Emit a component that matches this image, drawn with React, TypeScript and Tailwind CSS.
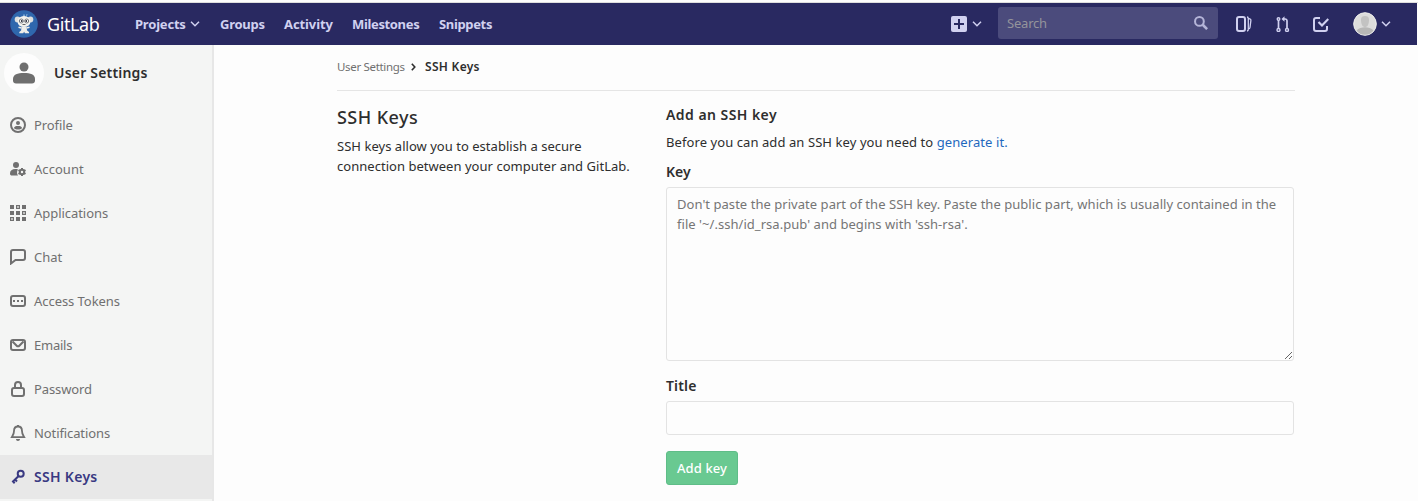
import type { ReactNode } from 'react';

const navLinks = [
  { label: 'Groups', style: 'w-[64px] tracking-[-0.25px]' },
  { label: 'Activity', style: 'w-[68px] tracking-[-0.1px]' },
  { label: 'Milestones', style: 'w-[87px] tracking-[-0.35px]' },
  { label: 'Snippets', style: 'w-[60px] tracking-[-0.35px]' },
];

function Icon({ size = 16, className = '', children }: { size?: number; className?: string; children: ReactNode }) {
  return (
    <svg width={size} height={size} viewBox="0 0 16 16" fill="none" stroke="currentColor" strokeWidth="2" className={`shrink-0 ${className}`}>
      {children}
    </svg>
  );
}

function Chevron() {
  return (
    <svg width="10" height="6" viewBox="0 0 10 6" fill="none" stroke="currentColor" strokeWidth="1.5" className="shrink-0">
      <path d="M1 .8 5 4.8 9 .8" />
    </svg>
  );
}

const sideItems: { label: string; tracking: string; icon: ReactNode }[] = [
  {
    label: 'Profile',
    tracking: 'tracking-[-0.1px]',
    icon: (
      <>
        <circle cx="8" cy="8" r="7" />
        <circle cx="8" cy="6" r="2" fill="currentColor" stroke="none" />
        <path d="M4 11.2C4 9.5 5.5 9 8 9s4 .5 4 2.2c-.8.9-2.300 1.300-4 1.300s-3.200-.4-4-1.300Z" fill="currentColor" stroke="none" />
      </>
    ),
  },
  {
    label: 'Account',
    tracking: 'tracking-[0.05px]',
    icon: (
      <>
        <circle cx="6" cy="4" r="3" fill="currentColor" stroke="none" />
        <path d="M0 12.500C0 9.500 2 8 5.500 8c1 0 1.800.1 2.500.4-1.300 1.800-1.300 4.200 0 6.100H2c-1.300 0-2-.6-2-2Z" fill="currentColor" stroke="none" />
        <circle cx="12" cy="11" r="2.200" />
        <path d="M12 7v1.500M12 13.500V15M8.500 9l1.400.8M14.100 12.200l1.400.8M8.500 13l1.400-.8M14.100 9.800 15.500 9" />
      </>
    ),
  },
  {
    label: 'Applications',
    tracking: 'tracking-[-0.05px]',
    icon: (
      <>
        <path d="M0 0h4v4H0zM12 0h4v4h-4zM0 6h4v4H0zM6 6h4v4H6zM6 12h4v4H6zM12 12h4v4h-4z" fill="currentColor" stroke="none" />
        <path d="M6.600.6h2.800v2.800H6.600zM12.600 6.600h2.800v2.800h-2.800zM.6 12.600h2.800v2.800H.6z" strokeWidth="1.200" />
      </>
    ),
  },
  {
    label: 'Chat',
    tracking: 'tracking-[0px]',
    icon: <path d="M3 1h10a2 2 0 0 1 2 2v6a2 2 0 0 1-2 2H5.500L1 14.500V3a2 2 0 0 1 2-2Z" />,
  },
  {
    label: 'Access Tokens',
    tracking: 'tracking-[-0.05px]',
    icon: (
      <>
        <rect x="1" y="3" width="14" height="10" rx="2" />
        <path d="M3 7h2v2H3zM7 7h2v2H7zM11 7h2v2h-2z" fill="currentColor" stroke="none" />
      </>
    ),
  },
  {
    label: 'Emails',
    tracking: 'tracking-[-0.25px]',
    icon: (
      <>
        <rect x="1" y="3" width="14" height="10" rx="2" />
        <path d="m2.500 4.500 4.200 4.300a1.800 1.800 0 0 0 2.600 0l4.200-4.300" />
      </>
    ),
  },
  {
    label: 'Password',
    tracking: 'tracking-[-0.1px]',
    icon: (
      <>
        <rect x="2" y="7" width="12" height="8" rx="2" />
        <path d="M5 7V4a3 3 0 0 1 6 0v3" />
      </>
    ),
  },
  {
    label: 'Notifications',
    tracking: 'tracking-[-0.1px]',
    icon: (
      <>
        <path d="M8 1.500C5.500 1.500 4 3.300 4 6c0 3-1 4-2.200 6.200h12.400C13 10 12 9 12 6c0-2.700-1.500-4.500-4-4.500Z" strokeWidth="1.800" />
        <path d="M6 14h4c0 1.200-.8 2-2 2s-2-.8-2-2ZM7 0h2v2H7z" fill="currentColor" stroke="none" />
      </>
    ),
  },
  {
    label: 'SSH Keys',
    tracking: 'text-[14px] tracking-[0.3px]',
    icon: (
      <>
        <circle cx="10.700" cy="4.800" r="3" />
        <path d="m8.600 7-5.800 5.800M5 10.500l2 2M2.300 11.800l2.400 2.400" />
      </>
    ),
  },
];

function Logo() {
  return (
    <svg width="28" height="28" viewBox="0 0 28 28" className="shrink-0">
      <circle cx="14" cy="14" r="13.800" fill="#2f67ad" />
      <path d="M14 4.500 15 7h-2ZM17 4l-.5 2.500" stroke="#80afd9" fill="none" />
      <ellipse cx="7.500" cy="9.500" rx="2.800" ry="3" fill="#dedfdf" />
      <ellipse cx="20.500" cy="9.500" rx="2.800" ry="3" fill="#dedfdf" />
      <ellipse cx="14" cy="11.500" rx="6.500" ry="5.500" fill="#f2f2ee" />
      <circle cx="11.300" cy="11" r="2" fill="#fff" stroke="#777a80" />
      <circle cx="16.700" cy="11" r="2" fill="#fff" stroke="#777a80" />
      <circle cx="11.700" cy="11" r=".9" fill="#292d38" />
      <circle cx="16.300" cy="11" r=".9" fill="#292d38" />
      <path d="M12.500 14.500h3" stroke="#666" />
      <path d="M11.500 17h5l.6 3.500 1.900 1.500v1.300h-4l-.9-1.500-.9 1.500H9.300V22l1.800-1.500Z" fill="#eeeeea" />
      <path d="m11.500 18-3-.8M16.500 18l3-.8" stroke="#eeeeea" strokeWidth="1.500" />
    </svg>
  );
}

function Navbar() {
  return (
    <header className="mr-px flex h-[42px] shrink-0 items-center bg-[#292961] text-[#d1d1f0]">
      <div className="flex w-[135px] items-center pl-[10px]">
        <Logo />
        <span className="ml-[9px] text-[18px] tracking-[-0.4px] text-white">GitLab</span>
      </div>
      <nav className="flex items-center pb-px text-[13px] font-bold leading-5">
        <a className="flex w-[85px] items-center">
          <span className="w-[55px] tracking-[-0.2px]">Projects</span>
          <Chevron />
        </a>
        {navLinks.map((l) => (
          <a key={l.label} className={l.style}>{l.label}</a>
        ))}
      </nav>
      <div className="ml-auto flex items-center">
        <div className="flex w-[47px] items-center gap-[5px] pb-px">
          <svg width="16" height="16" viewBox="0 0 16 16" className="shrink-0">
            <rect width="16" height="16" rx="2" fill="#d1d1f0" />
            <path d="M8 3v10M3 8h10" stroke="#292961" strokeWidth="2" />
          </svg>
          <Chevron />
        </div>
        <div className="mb-[2px] flex h-8 w-[220px] items-center justify-between rounded-[3px] bg-[#4b4b7c] pr-[10px] pl-[9px]">
          <span className="text-[13px] tracking-[-0.2px] text-[#94949b]">Search</span>
          <Icon size={14} className="text-[#b5b5d8]">
            <circle cx="6.200" cy="6.200" r="5" strokeWidth="2.300" />
            <path d="m10 10 5 5" strokeWidth="3" />
          </Icon>
        </div>
        <Icon className="mb-px ml-[18px]">
          <rect x="1" y="1" width="8" height="14" rx="2" />
          <path d="M11 1c1 0 1.300.8 1.300 1.500v11c0 .8-.3 1.300-1.300 1.500M12 2.500l1.800.4c.9.2 1.200.7 1.100 1.500L14 11.500c-.1.800-.7 1.300-1.500 1.300" strokeWidth="1.300" />
        </Icon>
        <Icon className="mb-px ml-[23px]">
          <circle cx="3.500" cy="14" r="1.500" strokeWidth="1.400" />
          <circle cx="3.500" cy="3" r="1.300" strokeWidth="1.400" />
          <circle cx="12" cy="14" r="1.500" strokeWidth="1.400" />
          <path d="M3.500 4v8.500M12 12.500V5c0-1.300-.7-2-2-2H8" strokeWidth="1.700" />
          <path d="M9.500.3v5.400L6.500 3Z" fill="currentColor" stroke="none" />
        </Icon>
        <Icon className="mb-px ml-[22px]">
          <path d="M7 2H3a2 2 0 0 0-2 2v9a2 2 0 0 0 2 2h9a2 2 0 0 0 2-2v-3" />
          <path d="m5.500 6 3.500 3.500L15.300 3" strokeWidth="2.200" />
        </Icon>
        <svg width="24" height="24" viewBox="0 0 24 24" className="mb-px ml-6 shrink-0">
          <circle cx="12" cy="12" r="11.300" fill="#dddddc" stroke="#eeeeec" />
          <path d="M8 7.500C8 5 9.500 4 12 4s4 1 4 3.500c0 5-1.500 7.500-4 7.500s-4-2.500-4-7.500Z" fill="#c3c3c2" />
          <path d="M3.500 18.500C5.500 16 9 15.200 12 15.200s6.500.8 8.500 3.300c-2 2.700-5 4.300-8.500 4.300s-6.500-1.600-8.500-4.300Z" fill="#b7b7b6" />
        </svg>
        <div className="ml-1 w-9"><Chevron /></div>
      </div>
    </header>
  );
}

function Sidebar() {
  return (
    <aside className="w-[214px] shrink-0 border-r-2 border-[#e7e7e7] bg-[#f4f5f4]">
      <div className="flex h-[58px] items-center pb-[2px] pl-1">
        <div className="flex size-10 items-center justify-center rounded-full bg-[#fdfdfd]">
          <svg width="22" height="22" viewBox="0 0 22 22" fill="#6f6f6f">
            <circle cx="11" cy="5" r="4.500" />
            <path d="M0 17c0-4.500 4.500-6 11-6s11 1.500 11 6v1.500c0 2-1.200 3-3 3H3c-1.800 0-3-1-3-3Z" />
          </svg>
        </div>
        <span className="ml-[10px] text-[14px] font-semibold tracking-[0.2px] text-[#2e2e2e]">User Settings</span>
      </div>
      {sideItems.map((item) => (
        <a
          key={item.label}
          className={`flex h-11 items-center gap-2 pl-[10px] text-[13px] ${
            item.label === 'SSH Keys' ? 'bg-[#e8e8e8] font-semibold text-[#393982]' : 'text-[#707070]'
          }`}
        >
          <Icon>{item.icon}</Icon>
          <span className={item.tracking}>{item.label}</span>
        </a>
      ))}
    </aside>
  );
}

export default function App() {
  return (
    <div className="flex h-[501px] w-[1418px] flex-col overflow-hidden bg-[#fdfdfd] font-['Noto_Sans',sans-serif] text-[13px] leading-5 text-[#2e2e2e]">
      <div className="h-[3px] shrink-0 border-b border-[#dedede]" />
      <Navbar />
      <div className="flex flex-1">
        <Sidebar />
        <main className="ml-[123px] w-[958px]">
          <div className="flex h-[46px] items-center border-b border-[#e5e5e5] pb-[2px] text-[12px]">
            <span className="w-[74px] text-[11.5px] tracking-[-0.33px] text-[#707070]">User Settings</span>
            <svg width="5" height="8" viewBox="0 0 5 8" fill="none" stroke="#2e2e2e" strokeWidth="1.600">
              <path d="m.8.8 3 3.200-3 3.200" />
            </svg>
            <span className="ml-[9px] font-semibold tracking-[0.3px]">SSH Keys</span>
          </div>
          <div className="flex">
            <section className="w-[329px] pt-[14px]">
              <h2 className="text-[18px] leading-6 font-medium tracking-[0.45px]">SSH Keys</h2>
              <p className="mt-[7px] tracking-[0.03px]">SSH keys allow you to establish a secure<br />connection between your computer and GitLab.</p>
            </section>
            <section className="w-[628px] pt-[14px]">
              <h3 className="text-[14px] leading-5 font-semibold tracking-[0.45px]">Add an SSH key</h3>
              <p className="mt-[7px] tracking-[0.08px]">
                Before you can add an SSH key you need to <a className="text-[#1f68bd]">generate it.</a>
              </p>
              <label className="mt-[10px] block text-[14px] leading-5 font-semibold">Key</label>
              <textarea
                className="mt-[5px] block h-[174px] w-full rounded-[3px] border border-[#e3e3e3] bg-transparent px-[10px] py-[6px] tracking-[0.04px] placeholder:text-[#757575]"
                placeholder="Don't paste the private part of the SSH key. Paste the public part, which is usually contained in the file '~/.ssh/id_rsa.pub' and begins with 'ssh-rsa'."
              />
              <label className="mt-[15px] block text-[14px] leading-5 font-semibold tracking-[0.15px]">Title</label>
              <input className="mt-[5px] block h-[34px] w-full rounded-[3px] border border-[#e3e3e3] bg-transparent px-[10px]" />
              <button className="mt-4 block h-[34px] w-[72px] rounded-[3px] border border-[#5fbd88] bg-[#69c991] font-medium tracking-[0.1px] text-white">Add key</button>
            </section>
          </div>
        </main>
      </div>
    </div>
  );
}
